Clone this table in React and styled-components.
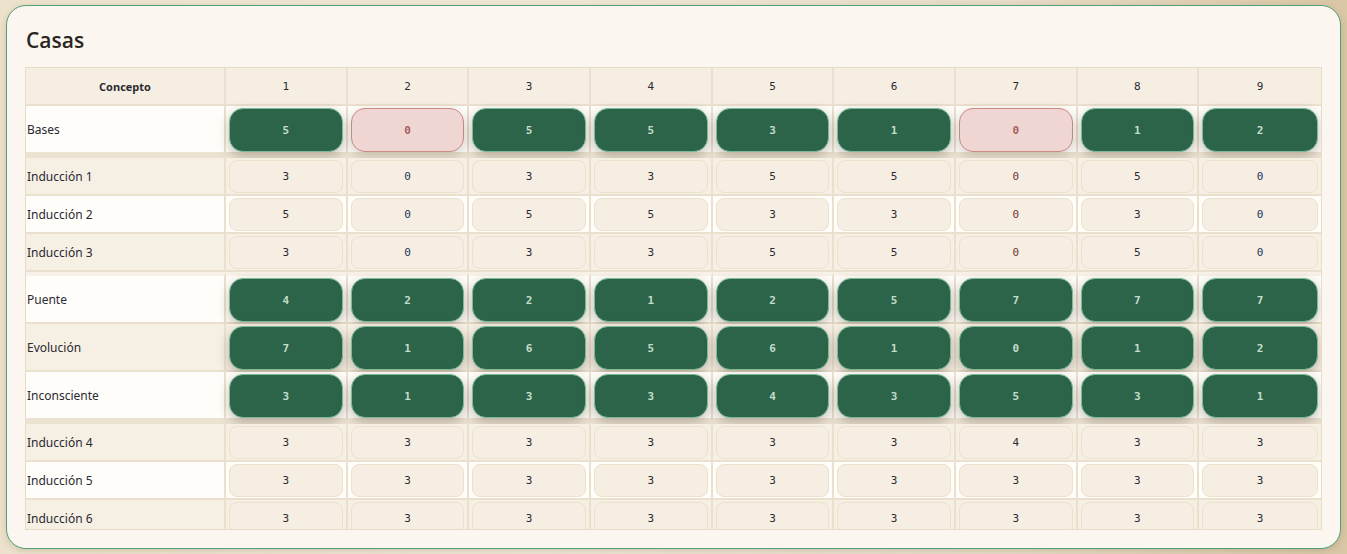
import React from "react";
import styled, { createGlobalStyle, css } from "styled-components";

const Global = createGlobalStyle`
  html, body { margin: 0; padding: 0; }
  body {
    background: linear-gradient(90deg, #ece1cb 0%, #efe6d6 40%, #e6dbc6 75%, #d8c6a5 100%);
    font-family: "Noto Sans", "Open Sans", sans-serif;
  }
  #root { padding: 5px 6px; box-sizing: border-box; }
`;

const Card = styled.section`
  box-sizing: border-box;
  height: 544px;
  background: #fbf7f0;
  border: 1px solid #4f9f79;
  border-radius: 20px;
  padding: 18px 18px 18px 18px;
  display: flex;
  flex-direction: column;
  box-shadow: 0 2px 6px rgba(90, 70, 40, 0.18);
`;

const Title = styled.h2`
  margin: 2px 0 13px 1px;
  font-family: "Open Sans", "Noto Sans", sans-serif;
  font-size: 21px;
  line-height: 28px;
  font-weight: 600;
  color: #2b2622;
`;

const TableWrap = styled.div`
  flex: 1;
  min-height: 0;
  overflow: hidden;
  border: 1px solid #e8dcc7;
`;

const Table = styled.table`
  width: 100%;
  table-layout: fixed;
  border-collapse: separate;
  border-spacing: 0;
`;

const HeadCell = styled.th`
  box-sizing: border-box;
  height: 38px;
  padding: 0;
  background: #f6eee3;
  border-right: ${(p) => (p.$last ? "none" : "2px solid #ebe0cd")};
  border-bottom: 2px solid #ebe0cd;
  color: #2a2a2e;
  font-size: 11px;
  font-weight: ${(p) => (p.$mono ? 400 : 700)};
  font-family: ${(p) =>
    p.$mono ? '"DejaVu Sans Mono", "Liberation Mono", monospace' : '"Open Sans", "Noto Sans", sans-serif'};
  text-align: center;
  vertical-align: middle;
`;

const Row = styled.tr`
  background: ${(p) => (p.$alt ? "#f6efe4" : "#fffdf9")};
`;

const cellBorders = css`
  border-bottom: ${(p) => (p.$sepBottom ? "6px solid #ece2d2" : "2px solid #ebe0cd")};
  border-top: ${(p) => (p.$sepTop ? "4px solid #f7f1e7" : "none")};
`;

const ConceptCell = styled.td`
  box-sizing: border-box;
  padding: 0 0 0 1px;
  border-right: 2px solid #ebe0cd;
  ${cellBorders}
  font-family: "Noto Sans", "Open Sans", sans-serif;
  font-size: 12px;
  color: #2a2a33;
  vertical-align: middle;
  white-space: nowrap;
`;

const ValueCell = styled.td`
  box-sizing: border-box;
  padding: 2px 3px ${(p) => (p.$big ? "0" : "1px")} 3px;
  border-right: ${(p) => (p.$last ? "none" : "2px solid #ebe0cd")};
  ${cellBorders}
  vertical-align: top;
`;

const plainColor = (tone) =>
  tone === "navy" ? "#25345a" : tone === "rust" ? "#74362f" : "#2c2b33";

const Chip = styled.div`
  box-sizing: border-box;
  display: flex;
  align-items: center;
  justify-content: center;
  font-family: "DejaVu Sans Mono", "Liberation Mono", monospace;
  font-size: 11px;
  height: ${(p) => (p.$kind === "plain" ? "33px" : "44px")};
  border-radius: ${(p) => (p.$kind === "plain" ? "8px" : "14px")};
  ${(p) =>
    p.$kind === "green"
      ? css`
          background: #2c6449;
          border: 1px solid #7dbb97;
          color: #c3dccc;
          font-weight: 700;
          box-shadow: 0 4px 12px rgba(40, 30, 15, 0.28);
        `
      : p.$kind === "pink"
      ? css`
          background: #f0d6d3;
          border: 1px solid #c88a87;
          color: #a3615b;
          font-weight: 700;
          box-shadow: 0 4px 12px rgba(40, 30, 15, 0.2);
        `
      : css`
          background: #f6eee3;
          border: 1px solid #ece1cd;
          color: ${plainColor(p.$tone)};
        `}
`;

const rows = [
  { name: "Bases", vals: [5, 0, 5, 5, 3, 1, 0, 1, 2], big: true, pinkZero: true, sepBottom: true },
  { name: "Inducción 1", vals: [3, 0, 3, 3, 5, 5, 0, 5, 0] },
  { name: "Inducción 2", vals: [5, 0, 5, 5, 3, 3, 0, 3, 0] },
  { name: "Inducción 3", vals: [3, 0, 3, 3, 5, 5, 0, 5, 0] },
  { name: "Puente", vals: [4, 2, 2, 1, 2, 5, 7, 7, 7], big: true, sepTop: true },
  { name: "Evolución", vals: [7, 1, 6, 5, 6, 1, 0, 1, 2], big: true },
  { name: "Inconsciente", vals: [3, 1, 3, 3, 4, 3, 5, 3, 1], big: true, sepBottom: true },
  { name: "Inducción 4", vals: [3, 3, 3, 3, 3, 3, 4, 3, 3] },
  { name: "Inducción 5", vals: [3, 3, 3, 3, 3, 3, 3, 3, 3] },
  { name: "Inducción 6", vals: [3, 3, 3, 3, 3, 3, 3, 3, 3] },
];

const cols = [1, 2, 3, 4, 5, 6, 7, 8, 9];

export default function App() {
  return (
    <>
      <Global />
      <Card>
        <Title>Casas</Title>
        <TableWrap>
          <Table>
            <colgroup>
              <col style={{ width: 200 }} />
              {cols.map((c) => (
                <col key={c} />
              ))}
            </colgroup>
            <thead>
              <tr>
                <HeadCell>Concepto</HeadCell>
                {cols.map((c, i) => (
                  <HeadCell key={c} $mono $last={i === cols.length - 1}>
                    {c}
                  </HeadCell>
                ))}
              </tr>
            </thead>
            <tbody>
              {rows.map((r, ri) => (
                <Row key={r.name} $alt={ri % 2 === 1}>
                  <ConceptCell $sepTop={r.sepTop} $sepBottom={r.sepBottom}>
                    {r.name}
                  </ConceptCell>
                  {r.vals.map((v, i) => {
                    const kind = r.big ? (r.pinkZero && v === 0 ? "pink" : "green") : "plain";
                    const tone = v === 0 ? (i === 6 ? "rust" : "navy") : "dark";
                    return (
                      <ValueCell
                        key={i}
                        $big={r.big}
                        $last={i === r.vals.length - 1}
                        $sepTop={r.sepTop}
                        $sepBottom={r.sepBottom}
                      >
                        <Chip $kind={kind} $tone={tone}>
                          {v}
                        </Chip>
                      </ValueCell>
                    );
                  })}
                </Row>
              ))}
            </tbody>
          </Table>
        </TableWrap>
      </Card>
    </>
  );
}
